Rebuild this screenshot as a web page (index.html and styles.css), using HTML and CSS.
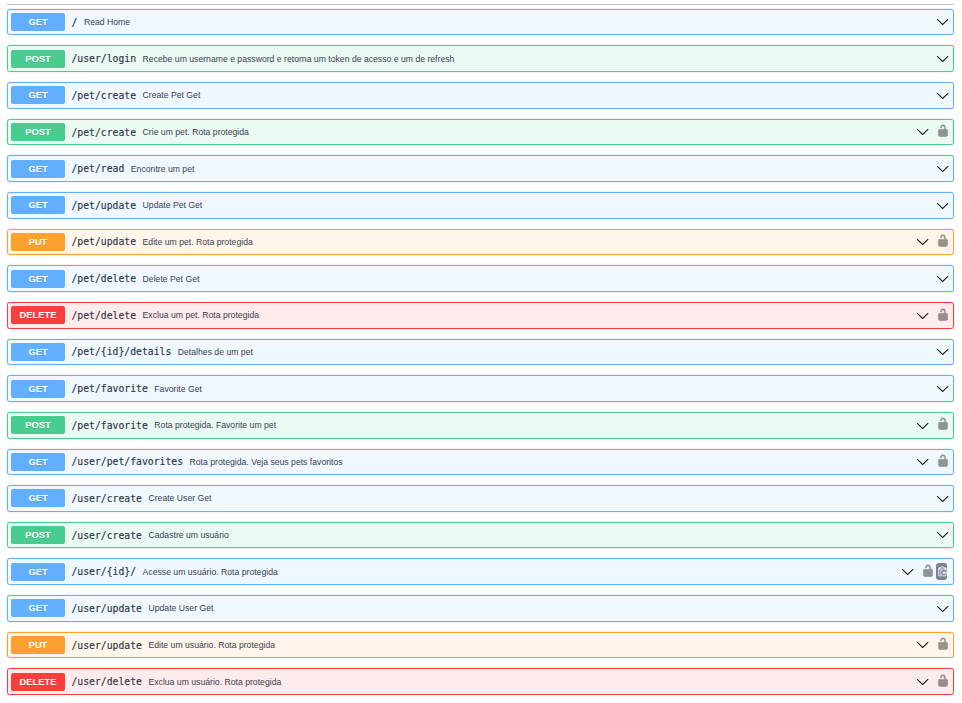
FILE: index.html
```
<!DOCTYPE html>
<html lang="pt-BR">
<head>
<meta charset="utf-8">
<title>API</title>
<link rel="stylesheet" href="styles.css">
</head>
<body>
<svg class="sprite" aria-hidden="true">
  <symbol id="arrow" viewBox="0 0 20 20"><path d="M17.418 6.109c.272-.268.709-.268.979 0s.271.701 0 .969l-7.908 7.83c-.27.268-.707.268-.979 0l-7.908-7.83c-.27-.268-.27-.701 0-.969.271-.268.709-.268.979 0L10 13.25l7.418-7.141z"/></symbol>
  <symbol id="lock" viewBox="0 0 20 20"><path d="M15.8 8H14V5.6C14 2.703 12.665 1 10 1 7.334 1 6 2.703 6 5.6V6h2v-.801C8 3.754 8.797 3 10 3c1.203 0 2 .754 2 2.199V8H4c-.553 0-1 .646-1 1.199V17c0 .549.428 1.139.951 1.307l1.197.387C5.672 18.861 6.55 19 7.1 19h5.8c.549 0 1.428-.139 1.951-.307l1.196-.387c.524-.167.953-.757.953-1.306V9.199C17 8.646 16.352 8 15.8 8z"/></symbol>
  <symbol id="copy" viewBox="0 0 15 16"><path fill-rule="evenodd" d="M4 12h4v1H4v-1zm5-6H4v1h5V6zm2 3V7l-3 3 3 3v-2h5V9h-5zM6.500 8H4v1h2.500V8zM4 11h2.500v-1H4v1zm9 1h1v2c-.02.28-.11.52-.3.7-.19.18-.42.28-.7.3H3c-.55 0-1-.45-1-1V3c0-.55.45-1 1-1h3c0-1.110.89-2 2-2 1.110 0 2 .89 2 2h3c.55 0 1 .45 1 1v5h-1V5H3v9h10v-2zM4 4h8c0-.55-.45-1-1-1h-1c-.55 0-1-.45-1-1s-.45-1-1-1-1 .45-1 1-.45 1-1 1H5c-.55 0-1 .45-1 1z"/></symbol>
</svg>
<main class="operations">
  <div class="op get"><span class="method">GET</span><span class="path">/</span><span class="summary">Read Home</span><svg class="arrow"><use href="#arrow"/></svg></div>
  <div class="op post"><span class="method">POST</span><span class="path">/user/login</span><span class="summary">Recebe um username e password e retorna um token de acesso e um de refresh</span><svg class="arrow"><use href="#arrow"/></svg></div>
  <div class="op get"><span class="method">GET</span><span class="path">/pet/create</span><span class="summary">Create Pet Get</span><svg class="arrow"><use href="#arrow"/></svg></div>
  <div class="op post"><span class="method">POST</span><span class="path">/pet/create</span><span class="summary">Crie um pet. Rota protegida</span><svg class="arrow"><use href="#arrow"/></svg><svg class="lock"><use href="#lock"/></svg></div>
  <div class="op get"><span class="method">GET</span><span class="path">/pet/read</span><span class="summary">Encontre um pet</span><svg class="arrow"><use href="#arrow"/></svg></div>
  <div class="op get"><span class="method">GET</span><span class="path">/pet/update</span><span class="summary">Update Pet Get</span><svg class="arrow"><use href="#arrow"/></svg></div>
  <div class="op put"><span class="method">PUT</span><span class="path">/pet/update</span><span class="summary">Edite um pet. Rota protegida</span><svg class="arrow"><use href="#arrow"/></svg><svg class="lock"><use href="#lock"/></svg></div>
  <div class="op get"><span class="method">GET</span><span class="path">/pet/delete</span><span class="summary">Delete Pet Get</span><svg class="arrow"><use href="#arrow"/></svg></div>
  <div class="op delete"><span class="method">DELETE</span><span class="path">/pet/delete</span><span class="summary">Exclua um pet. Rota protegida</span><svg class="arrow"><use href="#arrow"/></svg><svg class="lock"><use href="#lock"/></svg></div>
  <div class="op get"><span class="method">GET</span><span class="path">/pet/{id}/details</span><span class="summary">Detalhes de um pet</span><svg class="arrow"><use href="#arrow"/></svg></div>
  <div class="op get"><span class="method">GET</span><span class="path">/pet/favorite</span><span class="summary">Favorite Get</span><svg class="arrow"><use href="#arrow"/></svg></div>
  <div class="op post"><span class="method">POST</span><span class="path">/pet/favorite</span><span class="summary">Rota protegida. Favorite um pet</span><svg class="arrow"><use href="#arrow"/></svg><svg class="lock"><use href="#lock"/></svg></div>
  <div class="op get"><span class="method">GET</span><span class="path">/user/pet/favorites</span><span class="summary">Rota protegida. Veja seus pets favoritos</span><svg class="arrow"><use href="#arrow"/></svg><svg class="lock"><use href="#lock"/></svg></div>
  <div class="op get"><span class="method">GET</span><span class="path">/user/create</span><span class="summary">Create User Get</span><svg class="arrow"><use href="#arrow"/></svg></div>
  <div class="op post"><span class="method">POST</span><span class="path">/user/create</span><span class="summary">Cadastre um usuário</span><svg class="arrow"><use href="#arrow"/></svg></div>
  <div class="op get"><span class="method">GET</span><span class="path">/user/{id}/</span><span class="summary">Acesse um usuário. Rota protegida</span><svg class="arrow"><use href="#arrow"/></svg><svg class="lock"><use href="#lock"/></svg><span class="copy"><svg><use href="#copy"/></svg></span></div>
  <div class="op get"><span class="method">GET</span><span class="path">/user/update</span><span class="summary">Update User Get</span><svg class="arrow"><use href="#arrow"/></svg></div>
  <div class="op put"><span class="method">PUT</span><span class="path">/user/update</span><span class="summary">Edite um usuário. Rota protegida</span><svg class="arrow"><use href="#arrow"/></svg><svg class="lock"><use href="#lock"/></svg></div>
  <div class="op delete"><span class="method">DELETE</span><span class="path">/user/delete</span><span class="summary">Exclua um usuário. Rota protegida</span><svg class="arrow"><use href="#arrow"/></svg><svg class="lock"><use href="#lock"/></svg></div>
</main>
</body>
</html>
```
FILE: styles.css
```
* { box-sizing: border-box; }
body {
  margin: 0;
  padding-top: 4px;
  background: #fff;
  color: #3b4151;
  font-family: "Liberation Sans", Arial, sans-serif;
}
.sprite { display: none; }
.operations {
  display: flex;
  flex-direction: column;
  gap: 10px;
  margin: 0 8px 0 7px;
  padding-top: 3.83px;
  border-top: 1px solid #c4c6cb;
}
.op {
  display: flex;
  align-items: center;
  height: 26.65px;
  padding: 0 4px 0 3px;
  border: 1px solid;
  border-radius: 2.67px;
  box-shadow: 0 0 2px rgba(0, 0, 0, .19);
}
.get { border-color: #61affe; background: #eff7ff; }
.post { border-color: #49cc90; background: #ebf9f3; }
.put { border-color: #fca130; background: #fff5ea; }
.delete { border-color: #f93e3e; background: #feebeb; }
.method {
  width: 54px;
  height: 18px;
  border-radius: 2px;
  color: #fff;
  font-size: 9.33px;
  font-weight: 700;
  line-height: 18px;
  text-align: center;
  text-shadow: 0 1px 0 rgba(0, 0, 0, .1);
}
.get .method { background: #61affe; }
.post .method { background: #49cc90; }
.put .method { background: #fca130; }
.delete .method { background: #f93e3e; }
.path {
  margin-left: 6.5px;
  color: #303545;
  font-family: "DejaVu Sans Mono", monospace;
  font-size: 9.75px;
  -webkit-text-stroke: .15px #303545;
}
.summary {
  flex: 1;
  margin-left: 6.5px;
  font-size: 8.67px;
  white-space: nowrap;
}
.arrow {
  width: 13.33px;
  height: 13.33px;
  fill: #111;
}
.lock {
  width: 14px;
  height: 13.33px;
  margin: -2.2px -.5px 0 6.5px;
  fill: #000;
  opacity: .4;
}
.lock use { stroke: #000; stroke-width: .6px; }
.copy {
  display: flex;
  align-items: center;
  justify-content: center;
  width: 11px;
  height: 17px;
  margin: 0 2px 0 2px;
  border-radius: 3px;
  background: #7d8293;
}
.copy svg {
  width: 10px;
  height: 11px;
  fill: #fff;
}
```
